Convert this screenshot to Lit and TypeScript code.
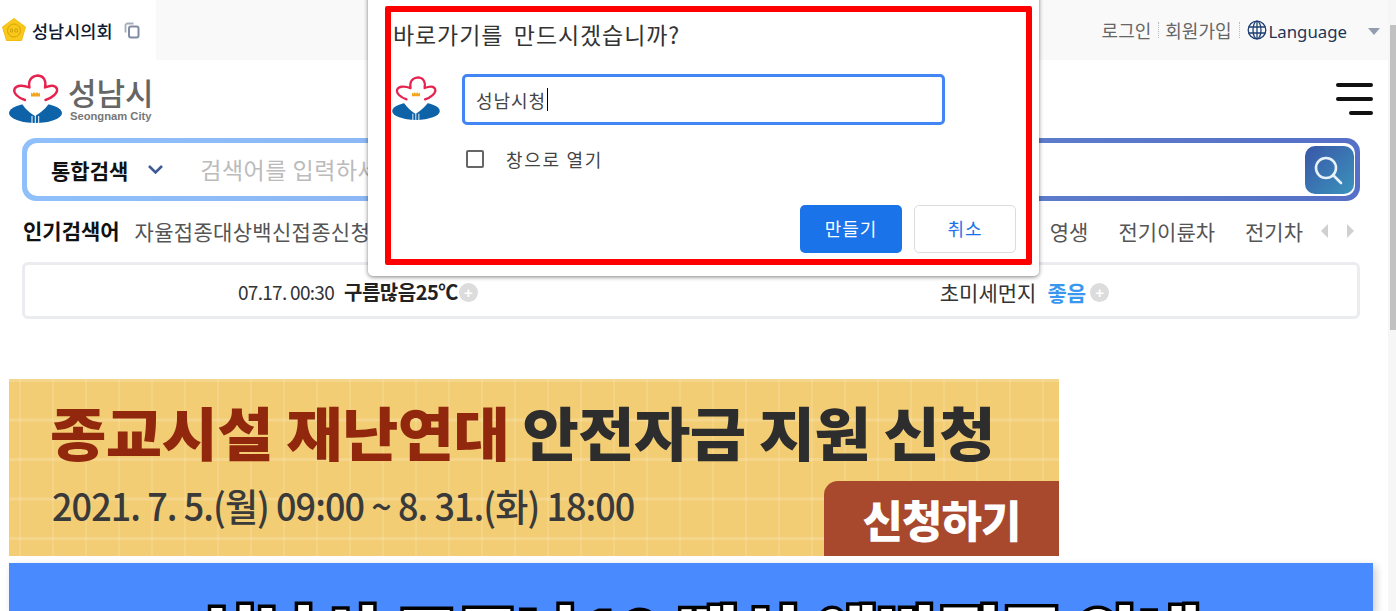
import { LitElement, html, css, unsafeCSS } from "lit";
import { customElement } from "lit/decorators.js";

const KR = `"Noto Sans CJK KR", "Noto Sans", sans-serif`;

const flower = (w: number, h: number) => html`<svg class="flower" width=${w} height=${h} viewBox="9 74 53 49">
  <ellipse cx="35.500" cy="113" rx="26.500" ry="10" fill="#0d62a8"/>
  <path d="M20 98C20 104 29 113 35 116 41 113 51 104 51 98L35 88Z" fill="#fff"/>
  <path d="M25 100C18 98 13 93 14.500 89 16.500 85 23 85 29.500 87.500 28 81 31 76 38 75.500 44 76 46.500 81 45 87.500 51 85 55.500 85 57 89 58 93 52 98 45.500 100" fill="#fff" stroke="#e6234f" stroke-width="2.400" stroke-linejoin="round" stroke-linecap="round"/>
  <path d="M31 92.500l1.500 1.200L34 92l1.500 1.700 1.500-1.700 1.500 1.700 1.500-1.200V96.500h-9Z" fill="#f2a51d"/>
  <path d="M32 123v-7M35.300 123v-8M38.700 123v-7" stroke="#fff" stroke-width="1"/>
</svg>`;

@customElement("app-root")
export class AppRoot extends LitElement {
  static styles = css`
    :host { display: block; width: 1396px; height: 611px; overflow: hidden; background: #fff; font-family: ${unsafeCSS(KR)}; }
    * { box-sizing: border-box; }
    .page { position: relative; width: 1396px; height: 611px; overflow: hidden; }
    .content { width: 1388px; display: flex; flex-direction: column; }
    .top { height: 60px; display: flex; align-items: center; }
    .tab { width: 156px; height: 60px; display: flex; align-items: center; padding-left: 2px; background: #fff; color: #0c1a33; font-size: 17.500px; font-weight: 500; }
    .tab span { margin-left: 6px; white-space: nowrap; }
    .tab .copy { margin-left: 10px; flex: none; }
    .util { flex: 1; height: 60px; background: #f9f9f9; display: flex; align-items: center; justify-content: flex-end; padding-right: 8px; font-size: 18px; color: #666; padding-bottom: 1px; white-space: nowrap; }
    .util .sep { width: 0; height: 16px; border-left: 1px dotted #bbb; margin: 0 6px 0 7px; }
    .util svg { margin-left: 1px; }
    .lang { color: #1f3556; font-family: "Noto Sans", sans-serif; font-size: 16.800px; margin-left: 2px; margin-right: 21px; padding-top: 3px; }
    .caret { width: 0; height: 0; border: 6px solid transparent; border-top: 7px solid #939cb0; border-bottom: 0; margin-top: 3px; }
    .brand { height: 76px; display: flex; align-items: center; justify-content: space-between; padding: 0 15px 0 9px; }
    .logo { display: flex; align-items: flex-start; padding-top: 1px; }
    .logo-text { display: flex; flex-direction: column; margin-left: 6px; color: #666; }
    .logo-text b { font-size: 31px; line-height: 36px; font-weight: 500; }
    .logo-text small { font-family: "Liberation Sans", sans-serif; font-size: 11.200px; line-height: 12px; font-weight: 700; color: #777; white-space: nowrap; margin-left: 2px; }
    .burger { width: 37px; display: flex; flex-direction: column; align-items: flex-end; gap: 10px; margin-top: 2px; }
    .burger i { display: block; height: 4px; width: 100%; background: #111; border-radius: 2px; }
    .burger i:last-child { width: 24px; }
    .search { margin: 2px 28px 0 22px; height: 63px; border-radius: 14px; padding: 5px; background: linear-gradient(90deg, #8fc0fb 0%, #8ab5f3 35%, #5d7ccb 75%, #5570c6 100%); }
    .search-in { height: 100%; background: #fff; border-radius: 10px; display: flex; align-items: center; padding: 0 1px 0 24px; }
    .scope { font-size: 21px; font-weight: 700; color: #111; white-space: nowrap; }
    .chev { margin-left: 19px; flex: none; }
    .ph { margin-left: 36px; flex: 1; color: #bbb; font-size: 23px; letter-spacing: .5px; white-space: nowrap; overflow: hidden; padding-bottom: 2px; }
    .go { width: 49px; height: 48px; border-radius: 10px; background: linear-gradient(135deg, #3a57a8, #3a93bc); display: flex; align-items: center; justify-content: center; flex: none; padding-right: 3px; }
    .hot { height: 32px; margin: 14px 28px 0 23px; display: flex; align-items: center; white-space: nowrap; padding-right: 6px; }
    .hot b { font-size: 21px; font-weight: 700; color: #111; padding-bottom: 3px; }
    .hot .a { margin-left: 15px; font-size: 21px; color: #555; letter-spacing: .3px; }
    .hot .r { margin-left: auto; display: flex; align-items: center; font-size: 21px; color: #555; }
    .hot .r span { margin-right: 30px; }
    .hot .r span:nth-of-type(3) { margin-right: 18px; }
    .arr { display: block; width: 0; height: 0; border-top: 7.500px solid transparent; border-bottom: 7.500px solid transparent; }
    .arr.l { border-right: 7px solid #d0d0d0; margin-right: 19px; }
    .arr.n { border-left: 7px solid #d0d0d0; }
    .weather { margin: 15px 28px 0 22px; height: 57px; border: 3px solid #ebecf0; border-radius: 6px; display: flex; align-items: center; color: #333; white-space: nowrap; padding-top: 2px; }
    .w1 { margin-left: 213px; display: flex; align-items: center; font-size: 19px; letter-spacing: -.7px; }
    .w1 b { margin-left: 10px; font-weight: 700; color: #222; font-size: 20px; letter-spacing: -.5px; }
    .w2 { margin-left: 462px; display: flex; align-items: center; font-size: 21px; }
    .w2 b { margin-left: 11px; color: #3a97ef; font-weight: 700; }
    .plus { width: 19px; height: 19px; margin: 1px 0 0 1px; border-radius: 50%; background: #dcdcdc; color: #fff; font: 700 15px/19px "Liberation Sans", sans-serif; text-align: center; flex: none; letter-spacing: 0; }
    .w2 .plus { margin-left: 4px; }
    .banner { margin: 60px 0 0 9px; width: 1050px; height: 177px; position: relative; overflow: hidden; background-color: #f3cd73;
      background-image: linear-gradient(90deg, rgba(255,255,255,.12) 2px, transparent 2px), linear-gradient(rgba(255,255,255,.17) 3px, transparent 3px);
      background-size: 33px 39.500px; background-position: 10px 0, 0 0; padding: 17px 0 0 41px; }
    .b1 { font-size: 58px; line-height: 70px; font-weight: 900; color: #2d2d2d; white-space: nowrap; letter-spacing: -.6px; transform-origin: 0 50%; transform: scaleX(1.056); }
    .b1 em { font-style: normal; color: #91280d; }
    .b2 { font-size: 38px; line-height: 48px; color: #3a3a3a; font-weight: 500; white-space: nowrap; margin-top: 15px; margin-left: 2px; letter-spacing: -1px; transform-origin: 0 50%; transform: scaleX(.947); }
    .apply { position: absolute; right: 0; bottom: 0; width: 235px; height: 75px; background: #a8482d; border-radius: 14px 0 0 0; color: #fff; font-size: 44px; font-weight: 900; display: flex; align-items: center; justify-content: center; letter-spacing: -1px; white-space: nowrap; }
    .notice { margin: 7px 0 0 9px; width: 1364px; height: 48px; background: #4a8aff; box-shadow: 3px 3px 8px rgba(0,0,0,.2); overflow: hidden; display: flex; justify-content: center; padding-left: 14px; }
    .notice div { font-size: 67px; line-height: 80px; margin-top: 30px; font-weight: 900; color: #fff; -webkit-text-stroke: 7px #000; paint-order: stroke fill; white-space: nowrap; }
    .scroll { position: absolute; left: 1388px; top: 0; width: 8px; height: 611px; background: #f6f6f6; padding-left: 2px; }
    .scroll i { display: block; margin-top: 25px; width: 6px; height: 305px; background: #c1c1c1; }
    .dialog { position: absolute; left: 368px; top: -10px; width: 671px; height: 286px; background: #fff; border-radius: 0 0 5px 5px; box-shadow: 0 1px 4px rgba(0,0,0,.5); }
    .red { position: absolute; left: 17px; top: 16px; width: 647px; height: 259px; border: 6px solid #f00; border-radius: 2px; padding: 7px 0 0 2px; color: #333; }
    .q { font-size: 23px; line-height: 30px; letter-spacing: .9px; word-spacing: 4.500px; white-space: nowrap; color: #333; }
    .row { display: flex; align-items: flex-start; margin-top: 25px; }
    .row .flower { margin: 2px 0 0 -1px; flex: none; }
    .field { margin-left: 22px; width: 483px; height: 51px; border: 3px solid #4285f4; border-radius: 5px; font-size: 18px; display: flex; align-items: center; padding-left: 11px; color: #444; letter-spacing: .9px; }
    .field i { display: block; width: 1px; height: 23px; background: #000; margin-left: 1px; }
    .chk { display: flex; align-items: center; margin: 21px 0 0 73px; font-size: 18px; letter-spacing: 1.700px; color: #444; white-space: nowrap; }
    .box { width: 18px; height: 18px; border: 2px solid #666; border-radius: 2px; margin-right: 22px; flex: none; }
    .btns { position: absolute; right: 10px; bottom: 6px; display: flex; gap: 12px; }
    .btn { width: 102px; height: 48px; border-radius: 5px; display: flex; align-items: center; justify-content: center; font-size: 18px; letter-spacing: 1px; padding-bottom: 3px; }
    .btn.p { background: #1a73e8; color: #fff; }
    .btn.c { border: 1px solid #dadce0; background: #fff; color: #1a73e8; }
  `;

  render() {
    return html`<div class="page">
      <div class="content">
        <div class="top">
          <div class="tab">
            <svg width="24" height="24" viewBox="0 0 24 24"><path d="M12 .5 23.500 9 19.500 22.500H4.500L.5 9Z" fill="#f8c81c" stroke="#f3bd10" stroke-linejoin="round" stroke-width="1"/><circle cx="12" cy="12.500" r="6.500" fill="none" stroke="#d9a400" stroke-width="1"/><path d="M8.500 11h2v3h-2zM13 11h2.500v3H13z" fill="none" stroke="#c79a00" stroke-width=".7"/></svg>
            <span>성남시의회</span>
            <svg class="copy" width="18" height="18" viewBox="0 0 18 18" fill="none"><path d="M10.500 2.500h-6a2 2 0 0 0-2 2v7" stroke="#a5adbb" stroke-width="1.800"/><rect x="6" y="5.500" width="9.500" height="11" rx="2" stroke="#7f8ca3" stroke-width="2"/></svg>
          </div>
          <div class="util">
            <span>로그인</span><i class="sep"></i><span>회원가입</span><i class="sep"></i>
            <svg width="20" height="20" viewBox="0 0 20 20" fill="none" stroke="#1d3f73" stroke-width="1.300"><circle cx="10" cy="10" r="8.800"/><ellipse cx="10" cy="10" rx="4" ry="8.800"/><path d="M10 1v18M1.500 7h17M1.500 13h17"/></svg>
            <span class="lang">Language</span><i class="caret"></i>
          </div>
        </div>
        <div class="brand">
          <div class="logo">${flower(53, 49)}<div class="logo-text"><b>성남시</b><small>Seongnam City</small></div></div>
          <div class="burger"><i></i><i></i><i></i></div>
        </div>
        <div class="search"><div class="search-in">
          <span class="scope">통합검색</span>
          <svg class="chev" width="17" height="11" viewBox="0 0 17 11" fill="none"><path d="M2 2l6.500 6.500L15 2" stroke="#3f5a95" stroke-width="2.600"/></svg>
          <div class="ph">검색어를 입력하세요</div>
          <div class="go"><svg width="32" height="32" viewBox="0 0 32 32" fill="none" stroke="#e9f1f8" stroke-width="2.600"><circle cx="14" cy="14" r="10"/><path d="M21 21l8 8" stroke-linecap="round"/></svg></div>
        </div></div>
        <div class="hot">
          <b>인기검색어</b><span class="a">자율접종대상백신접종신청</span>
          <div class="r"><span>영생</span><span>전기이륜차</span><span>전기차</span><i class="arr l"></i><i class="arr n"></i></div>
        </div>
        <div class="weather">
          <div class="w1">07.17. 00:30<b>구름많음25℃</b><i class="plus">+</i></div>
          <div class="w2">초미세먼지<b>좋음</b><i class="plus">+</i></div>
        </div>
        <div class="banner">
          <div class="b1"><em>종교시설 재난연대</em> 안전자금 지원 신청</div>
          <div class="b2">2021. 7. 5.(월) 09:00 ~ 8. 31.(화) 18:00</div>
          <div class="apply">신청하기</div>
        </div>
        <div class="notice"><div>성남시 코로나19 백신 예방접종 안내</div></div>
      </div>
      <div class="scroll"><i></i></div>
      <div class="dialog"><div class="red">
        <div class="q">바로가기를 만드시겠습니까?</div>
        <div class="row">${flower(48, 44)}<div class="field">성남시청<i></i></div></div>
        <div class="chk"><i class="box"></i>창으로 열기</div>
        <div class="btns"><div class="btn p">만들기</div><div class="btn c">취소</div></div>
      </div></div>
    </div>`;
  }
}
